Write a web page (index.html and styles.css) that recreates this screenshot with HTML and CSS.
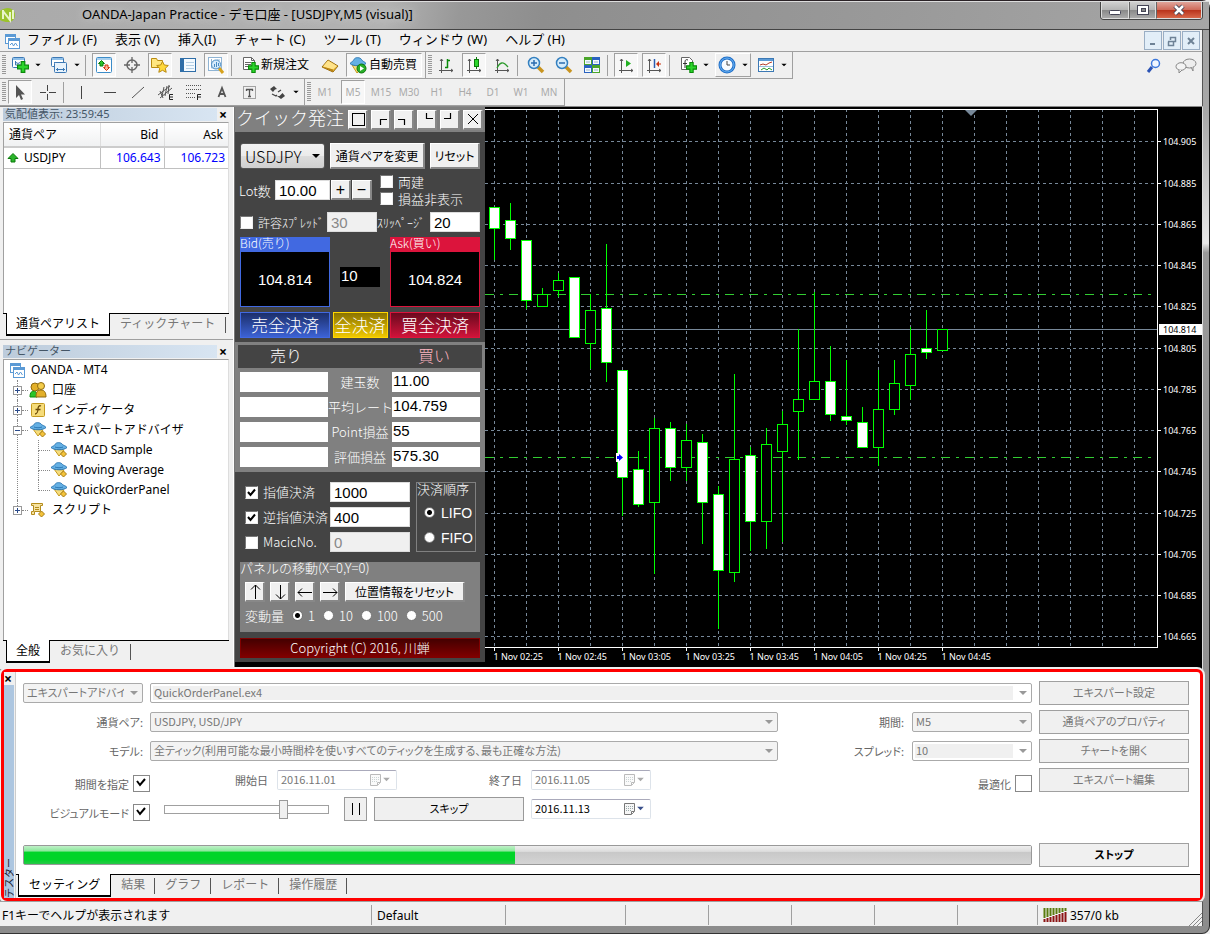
FILE: index.html
```html
<!DOCTYPE html>
<html lang="ja">
<head>
<meta charset="utf-8">
<title>OANDA-Japan Practice - デモ口座 - [USDJPY,M5 (visual)]</title>
<link rel="stylesheet" href="styles.css">
</head>
<body>
<svg class="defs" aria-hidden="true">
  <defs>
    <symbol id="i-plus" viewBox="0 0 10 10"><path d="M3.500.5h3v3h3v3h-3v3h-3v-3h-3v-3h3z" fill="#2bd52b" stroke="#0a8a0a"/></symbol>
    <symbol id="i-mt" viewBox="0 0 16 16"><rect x="1.500" y="1.500" width="10" height="9" fill="#fff" stroke="#5b9ad5"/><path d="M1 3h11" stroke="#5b9ad5" stroke-width="2"/><rect x="4.500" y="5.500" width="11" height="10" fill="#fff" stroke="#5b9ad5"/><path d="M4 7h12" stroke="#5b9ad5" stroke-width="2"/><path d="M6 12l2-2 1.500 3 2-3 2 3" fill="none" stroke="#5b9ad5"/></symbol>
    <symbol id="i-newchart" viewBox="0 0 18 18"><rect x="1.500" y="1.500" width="12" height="10" rx="1" fill="#fff" stroke="#3c78b4"/><path d="M2 3h11" stroke="#8fc0ea" stroke-width="2"/><path d="M4.500 5v4h5M5 6.500l2 1 2-1" fill="none" stroke="#3c78b4"/><use href="#i-plus" x="6" y="5" width="12" height="12"/></symbol>
    <symbol id="i-profiles" viewBox="0 0 18 18"><rect x="1.500" y="1.500" width="12" height="9" rx="1" fill="#fff" stroke="#3c78b4"/><path d="M2 3h11" stroke="#8fc0ea" stroke-width="2"/><path d="M4 6.500h6" stroke="#3c78b4"/><rect x="4.500" y="6.500" width="12" height="10" rx="1" fill="#e8f3fc" stroke="#3c78b4"/><path d="M6 13.500h9M7.500 15v-3M13.500 15v-3" stroke="#3c78b4"/></symbol>
    <symbol id="i-market" viewBox="0 0 18 18"><rect x="1.500" y="1.500" width="15" height="15" rx="1" fill="#fff" stroke="#3c8cc8"/><path d="M2 3h14" stroke="#a8d0ee" stroke-width="2"/><path d="M6.500 4.500l3 3H8v2.500H5V7.500H3.500z" fill="#2bc52b" stroke="#0a7a0a"/><path d="M11.500 14.500l3-3H13V9h-3v2.500H8.500z" fill="#ffb49a" stroke="#d0340a"/></symbol>
    <symbol id="i-cross" viewBox="0 0 18 18"><circle cx="9" cy="9" r="5" fill="none" stroke="#666" stroke-width="1.500"/><path d="M9 1v6M9 11v6M1 9h6M11 9h6" stroke="#666" stroke-width="1.300"/></symbol>
    <symbol id="i-star" viewBox="0 0 18 18"><path d="M.5 2.500h5l1 2h5v7H.5z" fill="#ffe680" stroke="#b98a10"/><path d="M11.500 5.500l1.800 3.500 4 .5-3 2.800.9 4-3.700-2-3.700 2 .9-4-3-2.800 4-.5z" fill="#ffd83a" stroke="#b98a10"/></symbol>
    <symbol id="i-data" viewBox="0 0 18 18"><rect x="1.500" y="2.500" width="15" height="13" fill="#f4faff" stroke="#2f6ea8"/><path d="M3.500 3v12" stroke="#2f6ea8" stroke-width="3"/><path d="M7 6.500h8M7 9.500h8M7 12.500h8" stroke="#b4cfe4"/></symbol>
    <symbol id="i-tester" viewBox="0 0 18 18"><rect x="1.500" y="1.500" width="13" height="13" fill="#fff" stroke="#8fb4d4"/><path d="M4.500 3v9h9M5 6h2M10 4h3" fill="none" stroke="#8fb4d4"/><path d="M12 12l4 5" stroke="#d7a21c" stroke-width="3"/><circle cx="9" cy="8.500" r="4.500" fill="#cfe8fa" fill-opacity=".85" stroke="#4a8cc4"/><path d="M7.500 11V8M9.500 11V6M11.500 10V7" stroke="#4a8cc4"/></symbol>
    <symbol id="i-order" viewBox="0 0 18 18"><path d="M2.500 1.500h8l3 3v9h-11z" fill="#fff" stroke="#666"/><path d="M10.500 1.500v3h3M4 6.500h6M4 8.500h6M4 10.500h4" fill="none" stroke="#666"/><use href="#i-plus" x="7" y="6" width="11" height="11"/></symbol>
    <symbol id="i-gold" viewBox="0 0 18 18"><path d="M1 11l6-7 10 6-5 6z" fill="#e9b830" stroke="#9a6c10"/><path d="M2 10.500l5-6 9 5.500-4 3.500z" fill="#ffe38a"/><path d="M1 10.500l11 3V16z" fill="#b98214"/></symbol>
    <symbol id="i-ea" viewBox="0 0 18 18"><path d="M4 8l5 7 5-6z" fill="#f7dc7a" stroke="#c49a20"/><path d="M1 6.500c2-2 3-1 4-3C6 1 11 1 12.500 3.500c1 1 3 1 4.500 3-3 3-13 3-16 0z" fill="#64b0e4" stroke="#2d78b4"/><path d="M5 6c2 1 6 1 8 0" fill="none" stroke="#2d78b4"/><path d="M13.500 10l3 3-3 3-3-3z" fill="#f3c23a" stroke="#a97d14"/></symbol>
    <symbol id="i-auto" viewBox="0 0 18 18"><path d="M3 9l5 8 7-7z" fill="#f7dc7a" stroke="#c49a20"/><path d="M1 7.500c2-2 3-2 4-4C6 1 11 1 12.500 3.500c1 2 3 2 4.500 4-3 3-13 3-16 0z" fill="#64b0e4" stroke="#2d78b4"/><circle cx="12.500" cy="12.500" r="4.500" fill="#27ae27" stroke="#0b750b"/><path d="M11 10l4 2.500-4 2.500z" fill="#fff"/></symbol>
    <symbol id="i-axes" viewBox="0 0 18 18"><path d="M4.500 3v14M2 14.500h14M3 5l1.500-2L6 5M14 13l2 1.500-2 1.500" fill="none" stroke="#555"/></symbol>
    <symbol id="i-bars" viewBox="0 0 18 18"><use href="#i-axes"/><path d="M10.500 3v9M10 4.500h3M8 11.500h3" stroke="#0a8a0a" stroke-width="1.500"/></symbol>
    <symbol id="i-candle" viewBox="0 0 18 18"><use href="#i-axes"/><path d="M11.500 1v12" stroke="#0a7a0a"/><rect x="9.500" y="3.500" width="4" height="7" fill="#2bd52b" stroke="#0a7a0a"/></symbol>
    <symbol id="i-line" viewBox="0 0 18 18"><use href="#i-axes"/><path d="M4 12c3-6 6-7 11-1" fill="none" stroke="#2a9a2a" stroke-width="1.300"/></symbol>
    <symbol id="i-zoomin" viewBox="0 0 18 18"><path d="M11 11l5 5" stroke="#c89420" stroke-width="3.500"/><circle cx="7" cy="7" r="5.500" fill="#d6ecfb" stroke="#3480c0" stroke-width="1.500"/><path d="M4 7h6M7 4v6" stroke="#2a6cb0" stroke-width="1.500"/></symbol>
    <symbol id="i-zoomout" viewBox="0 0 18 18"><path d="M11 11l5 5" stroke="#c89420" stroke-width="3.500"/><circle cx="7" cy="7" r="5.500" fill="#d6ecfb" stroke="#3480c0" stroke-width="1.500"/><path d="M4 7h6" stroke="#2a6cb0" stroke-width="1.500"/></symbol>
    <symbol id="i-tile" viewBox="0 0 18 18"><path d="M1 1h8v8H1zM9 9h8v8H9z" fill="#4aa52a"/><path d="M9 1h8v8H9zM1 9h8v8H1z" fill="#2a62c0"/><path d="M2 4h6v4H2zM10 4h6v4h-6zM2 12h6v4H2zM10 12h6v4h-6z" fill="#f4faff"/><path d="M3 6h4M11 6h4M3 14h4M11 14h4" stroke="#9ab4c8"/></symbol>
    <symbol id="i-scroll" viewBox="0 0 18 18"><use href="#i-axes"/><path d="M9 4l5 3.500L9 11z" fill="#22b022"/></symbol>
    <symbol id="i-shift" viewBox="0 0 18 18"><use href="#i-axes"/><path d="M9.500 3v9" stroke="#2a5cb0" stroke-width="1.500"/><path d="M11 8l3-3v6z" fill="#c83210"/><path d="M13 8h3" stroke="#c83210"/></symbol>
    <symbol id="i-ind" viewBox="0 0 18 18"><path d="M2.500 1.500h8l3 3v9h-11z" fill="#fff" stroke="#666"/><path d="M9 4c-2-1-3 0-3 2v6M4 7.500h4" fill="none" stroke="#333"/><use href="#i-plus" x="7" y="6" width="11" height="11"/></symbol>
    <symbol id="i-clock" viewBox="0 0 18 18"><circle cx="9" cy="9" r="7" fill="#f6fbff" stroke="#1f6ec8" stroke-width="3"/><circle cx="9" cy="9" r="7" fill="none" stroke="#6ab4f4"/><path d="M9 5v4h3" fill="none" stroke="#444"/></symbol>
    <symbol id="i-tmpl" viewBox="0 0 18 18"><rect x="1.500" y="2.500" width="15" height="13" fill="#fff" stroke="#3c78b4"/><path d="M2 4h14" stroke="#5b9ad5" stroke-width="2"/><path d="M3 9l3-1 3 1 3-2 3-1" fill="none" stroke="#b43c28"/><path d="M2 10.500h14" stroke="#9ac0e0"/><path d="M4 14l3-2 3 2 2-2 3 2" fill="none" stroke="#2a9a2a"/></symbol>
    <symbol id="i-cursor" viewBox="0 0 18 18"><path d="M5 2v13l3-3 2 5 2-1-2-4.500h4z" fill="#555"/></symbol>
    <symbol id="i-cross2" viewBox="0 0 18 18"><path d="M8.500 2v6M8.500 11v6M1 9.500h6M10 9.500h7" stroke="#444"/></symbol>
    <symbol id="i-vline" viewBox="0 0 18 18"><path d="M8.500 3v13" stroke="#444"/></symbol>
    <symbol id="i-hline" viewBox="0 0 18 18"><path d="M3 9.500h12" stroke="#444"/></symbol>
    <symbol id="i-trend" viewBox="0 0 18 18"><path d="M3 15L15 4" stroke="#555"/></symbol>
    <symbol id="i-chan" viewBox="0 0 18 18"><path d="M1 12L13 3M3 15L15 5M3 8l3 7M7 4L5 13M10 3L8 13M12 2l-1 9" stroke="#555"/><path d="M16 11.500h-3.500v5H16M12.500 14H16" fill="none" stroke="#222"/></symbol>
    <symbol id="i-fibo" viewBox="0 0 18 18"><path d="M1 2.500h15M1 6.500h15M1 10.500h10M1 14.500h9" stroke="#555" stroke-dasharray="1 1"/><path d="M16 11.500h-3.500V17M12.500 14H16" fill="none" stroke="#222"/></symbol>
    <symbol id="i-textA" viewBox="0 0 18 18"><path d="M5.500 14L9 5l3.500 9M6.500 11h5" fill="none" stroke="#555" stroke-width="1.800"/></symbol>
    <symbol id="i-textT" viewBox="0 0 18 18"><rect x="2.500" y="3.500" width="12" height="12" fill="none" stroke="#555" stroke-dasharray="1 1"/><path d="M5 6.500h7M8.500 6v8M5.500 6v2M11.500 6v2M7 13.500h3" stroke="#555" stroke-width="1.300"/></symbol>
    <symbol id="i-shapes" viewBox="0 0 18 18"><path d="M5 3l3 3-2 .5L4 9 1 6z M12 16l-4-3h2.500l3-3 2.500 3z" fill="#444"/><path d="M3 11l4 2 1-1M9 9l3-2" fill="none" stroke="#444" stroke-width="1.300"/></symbol>
    <symbol id="i-search" viewBox="0 0 18 18"><path d="M7 10l-4 5" stroke="#2a52b4" stroke-width="3"/><circle cx="10.500" cy="6.500" r="4" fill="#f0f6ff" stroke="#3c78dc" stroke-width="1.500"/></symbol>
    <symbol id="i-chat" viewBox="0 0 22 18"><ellipse cx="14.500" cy="6.500" rx="6.500" ry="4.500" fill="#eee" stroke="#888"/><path d="M16 10l2 4v-4" fill="#eee" stroke="#888"/><ellipse cx="6" cy="9.500" rx="5" ry="3.800" fill="#f4f4f4" stroke="#888"/><path d="M4 13v3l3-3" fill="#f4f4f4" stroke="#888"/></symbol>
    <symbol id="i-acc" viewBox="0 0 18 18"><path d="M1 16c0-5 2-6 4-6s3 2 3 6z" fill="#2bc52b" stroke="#0a8a0a"/><circle cx="6" cy="6" r="4" fill="#e3b02a" stroke="#8f6a10"/><path d="M7 16c0-6 2-7 5-7s5 2 5 7z" fill="#e3b02a" stroke="#8f6a10"/><circle cx="12" cy="5" r="3.500" fill="#f3cc4a" stroke="#8f6a10"/></symbol>
    <symbol id="i-func" viewBox="0 0 18 18"><rect x="2.500" y="2.500" width="13" height="13" rx="1" fill="#f6dc7a" stroke="#c49a20"/><path d="M12 5c-2-1-3 1-3 3s-1 5-3 5M6.500 8.500h5" fill="none" stroke="#6a4a08" stroke-width="1.300"/></symbol>
    <symbol id="i-script" viewBox="0 0 18 18"><path d="M2.500 2.500h11v2h-2v6h-6v3h-3v-3h2v-6h-2z" fill="#f6e3a0" stroke="#b48c1c"/><path d="M6 6.500h4M6 8.500h4" stroke="#b48c1c"/><path d="M12.500 10l3 3-3 3-3-3z" fill="#f3c23a" stroke="#a97d14"/></symbol>
    <symbol id="i-cal" viewBox="0 0 13 13"><path d="M1.500 1.500h10v8l-3 3h-7z" fill="#f6f6f6" stroke="#777"/><path d="M3 4.500h7M3 6.500h7M3 8.500h5" stroke="#9aa" stroke-dasharray="1 1"/><path d="M8.500 12v-2.500H11" fill="#fff" stroke="#777"/></symbol>
    <symbol id="i-drop" viewBox="0 0 8 6"><path d="M0 1h8L4 5z" fill="currentColor"/></symbol>
  </defs>
</svg>

<div class="window">
  <header class="titlebar">
    <svg class="logo" viewBox="0 0 16 18" aria-hidden="true"><path d="M0 4c8-6 15-2 15 4 0 7-7 9-15 5z" fill="#9bc32c"/><path d="M3 3v9M3 4l7 9V5M13 3v9" fill="none" stroke="#e9f5c8" stroke-width="2"/></svg>
    <h1 class="caption">OANDA-Japan Practice - デモ口座 - [USDJPY,M5 (visual)]</h1>
    <div class="winbtns">
      <button class="winbtn" aria-label="最小化"><svg viewBox="0 0 16 14"><rect x="2.500" y="7.500" width="11" height="4" rx="1" fill="#fff" stroke="#445"/></svg></button>
      <button class="winbtn" aria-label="最大化"><svg viewBox="0 0 16 14"><rect x="2.500" y="2.500" width="11" height="9" fill="#fff" stroke="#445"/><rect x="6.500" y="5.500" width="4" height="3" fill="#888" stroke="#445"/></svg></button>
      <button class="winbtn winbtn-close" aria-label="閉じる"><svg viewBox="0 0 16 14"><path d="M4 3l8 8M12 3l-8 8" stroke="#445" stroke-width="4.500"/><path d="M4 3l8 8M12 3l-8 8" stroke="#fff" stroke-width="2.500"/></svg></button>
    </div>
  </header>

  <nav class="menubar">
    <svg class="menu-icon"><use href="#i-mt"/></svg>
    <button>ファイル (F)</button><button>表示 (V)</button><button>挿入(I)</button><button>チャート (C)</button><button>ツール (T)</button><button>ウィンドウ (W)</button><button>ヘルプ (H)</button>
    <div class="mdibtns">
      <button aria-label="最小化"><svg viewBox="0 0 12 12"><path d="M3 9h5" stroke="#6e8296" stroke-width="2"/></svg></button>
      <button aria-label="元に戻す"><svg viewBox="0 0 12 12"><path d="M4.500 5V2.500h5v4H8M2 6.500h5.500v4h-5v-4" fill="none" stroke="#6e8296" stroke-width="1.500"/></svg></button>
      <button aria-label="閉じる"><svg viewBox="0 0 12 12"><path d="M3 3l6 6M9 3l-6 6" stroke="#6e8296" stroke-width="2"/></svg></button>
    </div>
  </nav>

  <div class="toolrow">
    <div class="toolbar">
      <span class="grip"></span>
      <button class="tb drop" aria-label="新規チャート"><svg><use href="#i-newchart"/></svg><svg class="arr"><use href="#i-drop"/></svg></button>
      <button class="tb drop" aria-label="プロファイル"><svg><use href="#i-profiles"/></svg><svg class="arr"><use href="#i-drop"/></svg></button>
      <span class="sep"></span>
      <button class="tb on" aria-label="気配値表示"><svg><use href="#i-market"/></svg></button>
      <button class="tb" aria-label="十字"><svg><use href="#i-cross"/></svg></button>
      <button class="tb on" aria-label="ナビゲーター"><svg><use href="#i-star"/></svg></button>
      <button class="tb" aria-label="データウィンドウ"><svg><use href="#i-data"/></svg></button>
      <button class="tb on" aria-label="ストラテジーテスター"><svg><use href="#i-tester"/></svg></button>
      <span class="sep"></span>
      <button class="tb wide"><svg><use href="#i-order"/></svg>新規注文</button>
      <button class="tb" aria-label="メタエディター"><svg><use href="#i-gold"/></svg></button>
      <button class="tb wide on"><svg><use href="#i-auto"/></svg>自動売買</button>
      <span class="sep end"></span>
    </div>
    <div class="toolbar">
      <span class="grip"></span>
      <button class="tb" aria-label="バーチャート"><svg><use href="#i-bars"/></svg></button>
      <button class="tb on" aria-label="ローソク足"><svg><use href="#i-candle"/></svg></button>
      <button class="tb" aria-label="ライン"><svg><use href="#i-line"/></svg></button>
      <span class="sep"></span>
      <button class="tb" aria-label="拡大"><svg><use href="#i-zoomin"/></svg></button>
      <button class="tb" aria-label="縮小"><svg><use href="#i-zoomout"/></svg></button>
      <button class="tb" aria-label="整列"><svg><use href="#i-tile"/></svg></button>
      <span class="sep"></span>
      <button class="tb on" aria-label="自動スクロール"><svg><use href="#i-scroll"/></svg></button>
      <button class="tb on" aria-label="チャートシフト"><svg><use href="#i-shift"/></svg></button>
      <span class="sep"></span>
      <button class="tb drop" aria-label="インディケータ"><svg><use href="#i-ind"/></svg><svg class="arr"><use href="#i-drop"/></svg></button>
      <button class="tb drop raised" aria-label="周期"><svg><use href="#i-clock"/></svg><svg class="arr"><use href="#i-drop"/></svg></button>
      <button class="tb drop" aria-label="テンプレート"><svg><use href="#i-tmpl"/></svg><svg class="arr"><use href="#i-drop"/></svg></button>
      <span class="sep end"></span>
    </div>
    <div class="toolright">
      <button class="tb" aria-label="検索"><svg><use href="#i-search"/></svg></button>
      <button class="tb chat" aria-label="チャット"><svg><use href="#i-chat"/></svg></button>
    </div>
  </div>

  <div class="toolrow">
    <div class="toolbar">
      <span class="grip"></span>
      <button class="tb on" aria-label="カーソル"><svg><use href="#i-cursor"/></svg></button>
      <button class="tb" aria-label="十字カーソル"><svg><use href="#i-cross2"/></svg></button>
      <span class="sep"></span>
      <button class="tb" aria-label="垂直線"><svg><use href="#i-vline"/></svg></button>
      <button class="tb" aria-label="水平線"><svg><use href="#i-hline"/></svg></button>
      <button class="tb" aria-label="トレンドライン"><svg><use href="#i-trend"/></svg></button>
      <button class="tb" aria-label="チャネル"><svg><use href="#i-chan"/></svg></button>
      <button class="tb" aria-label="フィボナッチ"><svg><use href="#i-fibo"/></svg></button>
      <button class="tb" aria-label="テキスト"><svg><use href="#i-textA"/></svg></button>
      <button class="tb" aria-label="ラベル"><svg><use href="#i-textT"/></svg></button>
      <button class="tb drop" aria-label="矢印"><svg><use href="#i-shapes"/></svg><svg class="arr"><use href="#i-drop"/></svg></button>
      <span class="sep end"></span>
    </div>
    <div class="toolbar">
      <span class="grip"></span>
      <button class="tb tf">M1</button><button class="tb tf on">M5</button><button class="tb tf">M15</button><button class="tb tf">M30</button><button class="tb tf">H1</button><button class="tb tf">H4</button><button class="tb tf">D1</button><button class="tb tf">W1</button><button class="tb tf">MN</button>
      <span class="sep end"></span>
    </div>
  </div>

  <main class="main">
    <aside class="docks">
      <section class="dock dock-market">
        <header class="docktitle"><h2>気配値表示: 23:59:45</h2><button class="x" aria-label="閉じる">×</button></header>
        <div class="dockbody">
          <table class="quotes">
            <thead><tr><th>通貨ペア</th><th>Bid</th><th>Ask</th></tr></thead>
            <tbody><tr><td><svg class="up" viewBox="0 0 12 12"><path d="M6 1.500L11 6.500H8V10H4V6.500H1z" fill="#2bb52b" stroke="#0a7a0a"/></svg>USDJPY</td><td>106.643</td><td>106.723</td></tr></tbody>
          </table>
        </div>
        <div class="tabs"><button class="tab active">通貨ペアリスト</button><button class="tab">ティックチャート</button></div>
      </section>
      <section class="dock dock-nav">
        <header class="docktitle"><h2>ナビゲーター</h2><button class="x" aria-label="閉じる">×</button></header>
        <div class="dockbody">
          <div class="root"><svg><use href="#i-mt"/></svg>OANDA - MT4</div>
          <ul class="tree">
            <li><span class="node"><i class="box plus"></i><svg><use href="#i-acc"/></svg>口座</span></li>
            <li><span class="node"><i class="box plus"></i><svg><use href="#i-func"/></svg>インディケータ</span></li>
            <li><span class="node"><i class="box"></i><svg><use href="#i-ea"/></svg>エキスパートアドバイザ</span>
              <ul class="subtree">
                <li><span class="node"><svg><use href="#i-ea"/></svg>MACD Sample</span></li>
                <li><span class="node"><svg><use href="#i-ea"/></svg>Moving Average</span></li>
                <li><span class="node"><svg><use href="#i-ea"/></svg>QuickOrderPanel</span></li>
              </ul>
            </li>
            <li><span class="node"><i class="box plus"></i><svg><use href="#i-script"/></svg>スクリプト</span></li>
          </ul>
        </div>
        <div class="tabs"><button class="tab active">全般</button><button class="tab">お気に入り</button></div>
      </section>
    </aside>

    <div class="chartwin">
      <section class="panel">
        <header class="phead">
          <h2>クイック発注</h2>
          <button class="pb sq" aria-label="最大化"><svg viewBox="0 0 16 16"><rect x="2.500" y="2.500" width="12" height="12" fill="none" stroke="#000"/></svg></button>
          <button class="pb sq" aria-label="左上"><svg viewBox="0 0 16 16"><path d="M7.500 14V8.500H14" fill="none" stroke="#000" stroke-width="1.200"/></svg></button>
          <button class="pb sq" aria-label="右上"><svg viewBox="0 0 16 16"><path d="M2 8.500h6.500V14" fill="none" stroke="#000" stroke-width="1.200"/></svg></button>
          <button class="pb sq" aria-label="左下"><svg viewBox="0 0 16 16"><path d="M7.500 2v5.500H14" fill="none" stroke="#000" stroke-width="1.200"/></svg></button>
          <button class="pb sq" aria-label="右下"><svg viewBox="0 0 16 16"><path d="M2 7.500h6.500V2" fill="none" stroke="#000" stroke-width="1.200"/></svg></button>
          <button class="pb sq" aria-label="閉じる"><svg viewBox="0 0 16 16"><path d="M3 3l10 10M13 3L3 13" stroke="#000"/></svg></button>
        </header>
        <div class="prow row-pair">
          <select class="pselect" aria-label="通貨ペア"><option>USDJPY</option></select>
          <button class="pb pair">通貨ペアを変更</button>
          <button class="pb reset">リセット</button>
        </div>
        <div class="prow row-lot">
          <label for="lot">Lot数</label>
          <input id="lot" class="num lot" value="10.00">
          <button class="pb sq sign">+</button><button class="pb sq sign">−</button>
          <div class="opts">
            <label><input type="checkbox">両建</label>
            <label><input type="checkbox">損益非表示</label>
          </div>
        </div>
        <div class="prow row-spread">
          <label class="sp"><input type="checkbox">許容ｽﾌﾟﾚｯﾄﾞ</label>
          <input class="num" value="30" disabled aria-label="許容スプレッド">
          <label class="slip" for="slip">ｽﾘｯﾍﾟｰｼﾞ</label>
          <input id="slip" class="num" value="20">
        </div>
        <div class="prices">
          <div class="price bid"><span>Bid(売り)</span><button>104.814</button></div>
          <output class="spread">10</output>
          <div class="price ask"><span>Ask(買い)</span><button>104.824</button></div>
          <button class="close-btn c-bid">売全決済</button>
          <button class="close-btn c-all">全決済</button>
          <button class="close-btn c-ask">買全決済</button>
        </div>
        <div class="positions">
          <div class="poshead"><span>売り</span><span class="buy">買い</span></div>
          <div class="posgrid">
            <output></output><span>建玉数</span><output>11.00</output>
            <output></output><span>平均レート</span><output>104.759</output>
            <output></output><span>Point損益</span><output>55</output>
            <output></output><span>評価損益</span><output>575.30</output>
          </div>
        </div>
        <div class="limits">
          <div class="limitgrid">
            <label><input type="checkbox" checked>指値決済</label><input class="num" value="1000" aria-label="指値決済">
            <label><input type="checkbox" checked>逆指値決済</label><input class="num" value="400" aria-label="逆指値決済">
            <label><input type="checkbox">MacicNo.</label><input class="num" value="0" disabled aria-label="MacicNo.">
          </div>
          <div class="order" role="radiogroup" aria-labelledby="ord">
            <span id="ord">決済順序</span>
            <label><input type="radio" name="ord" checked>LIFO</label>
            <label><input type="radio" name="ord">FIFO</label>
          </div>
        </div>
        <div class="move">
          <span class="movetitle">パネルの移動(X=0,Y=0)</span>
          <div class="movebtns">
            <button class="pb sq" aria-label="上"><svg viewBox="0 0 16 16"><path d="M8.500 15V1M4 5.500L8.500 1 13 5.500" fill="none" stroke="#000"/></svg></button>
            <button class="pb sq" aria-label="下"><svg viewBox="0 0 16 16"><path d="M8.500 1v14M4 10.500L8.500 15l4.500-4.500" fill="none" stroke="#000"/></svg></button>
            <button class="pb sq" aria-label="左"><svg viewBox="0 0 16 16"><path d="M15 8.500H1M5 4.500l-4 4 4 4" fill="none" stroke="#000"/></svg></button>
            <button class="pb sq" aria-label="右"><svg viewBox="0 0 16 16"><path d="M1 8.500h14M11 4.500l4 4-4 4" fill="none" stroke="#000"/></svg></button>
            <button class="pb posreset">位置情報をリセット</button>
          </div>
          <div class="steps">
            <span>変動量</span>
            <label><input type="radio" name="st" checked>1</label>
            <label><input type="radio" name="st">10</label>
            <label><input type="radio" name="st">100</label>
            <label><input type="radio" name="st">500</label>
          </div>
        </div>
        <footer class="copy">Copyright (C) 2016, 川蝉</footer>
      </section>
      <div class="chart"><svg id="chart" role="img" aria-label="USDJPY M5"></svg></div>
    </div>
  </main>

  <section class="tester">
    <div class="side"><button class="x" aria-label="閉じる">×</button><h2>テスター</h2></div>
    <div class="tmain">
      <div class="form">
        <div class="frow">
          <select class="ts c1" disabled aria-label="種類"><option>エキスパートアドバイザ</option></select>
          <select class="ts combo grow" disabled aria-label="エキスパート"><option>QuickOrderPanel.ex4</option></select>
          <button class="tbtn" disabled>エキスパート設定</button>
        </div>
        <div class="frow">
          <label class="c1" for="sym">通貨ペア:</label>
          <select id="sym" class="ts grow" disabled><option>USDJPY, USD/JPY</option></select>
          <label class="c3" for="per">期間:</label>
          <select id="per" class="ts c4" disabled><option>M5</option></select>
          <button class="tbtn" disabled>通貨ペアのプロパティ</button>
        </div>
        <div class="frow">
          <label class="c1" for="mod">モデル:</label>
          <select id="mod" class="ts grow" disabled><option>全ティック(利用可能な最小時間枠を使いすべてのティックを生成する、最も正確な方法)</option></select>
          <label class="c3" for="spr">スプレッド:</label>
          <select id="spr" class="ts combo c4" disabled><option>10</option></select>
          <button class="tbtn" disabled>チャートを開く</button>
        </div>
        <div class="frow">
          <label class="chk">期間を指定<input type="checkbox" checked></label>
          <label class="dl from" for="d1">開始日</label>
          <span class="date off"><input id="d1" value="2016.11.01" disabled><svg class="cal"><use href="#i-cal"/></svg><svg class="arr"><use href="#i-drop"/></svg></span>
          <label class="dl to" for="d2">終了日</label>
          <span class="date off"><input id="d2" value="2016.11.05" disabled><svg class="cal"><use href="#i-cal"/></svg><svg class="arr"><use href="#i-drop"/></svg></span>
          <label class="chk opt">最適化<input type="checkbox"></label>
          <button class="tbtn" disabled>エキスパート編集</button>
        </div>
        <div class="frow">
          <label class="chk">ビジュアルモード<input type="checkbox" checked></label>
          <input class="speed" type="range" min="0" max="100" value="74" aria-label="速度">
          <button class="pause" aria-label="一時停止"><svg viewBox="0 0 14 14"><path d="M3.500 1v12M10.500 1v12" stroke="#000"/></svg></button>
          <button class="skip">スキップ</button>
          <span class="date"><input value="2016.11.13" aria-label="スキップ先"><svg class="cal"><use href="#i-cal"/></svg><svg class="arr"><use href="#i-drop"/></svg></span>
        </div>
        <div class="frow run">
          <progress class="grow" max="1000" value="488" aria-label="進捗"></progress>
          <button class="tbtn stop">ストップ</button>
        </div>
      </div>
      <div class="tabs ttabs"><button class="tab active">セッティング</button><button class="tab">結果</button><button class="tab">グラフ</button><button class="tab">レポート</button><button class="tab">操作履歴</button></div>
    </div>
  </section>

  <footer class="status">
    <span class="s-help">F1キーでヘルプが表示されます</span>
    <span class="s-prof">Default</span>
    <span class="s1"></span><span class="s2"></span><span class="s2"></span><span class="s2"></span><span class="s2"></span><span class="s3"></span>
    <span class="s-net"><svg viewBox="0 0 24 14"><path d="M1.500 0v10M4.500 0v9M7.500 0v8M10.500 0v7M13.500 0v6M16.500 0v5M19.500 0v4M22.500 0v3" stroke="#5a7d10" stroke-width="2"/><path d="M1.500 11v3M4.500 10v4M7.500 9v5M10.500 8v6M13.500 7v7M16.500 6v8M19.500 5v9M22.500 4v10" stroke="#8c1414" stroke-width="2"/></svg>357/0 kb</span>
    <svg class="resize" viewBox="0 0 14 14"><path d="M1 14L14 1M5 14l9-9M9 14l5-5" stroke="#888"/></svg>
  </footer>
</div>
<script src="chart.js"></script>
</body>
</html>
```
FILE: styles.css
```css
* { box-sizing: border-box; }
:root {
  --ui: "Noto Sans", "Noto Sans CJK JP", sans-serif;
  --jp: "Noto Sans CJK JP", "Noto Sans", sans-serif;
  --num: "Liberation Sans", "Noto Sans CJK JP", sans-serif;
  --face: #f0f0f0;
  --line: #a0a0a0;
}
html, body { margin: 0; height: 100%; }
body { font: 12px/16px var(--ui); color: #000; background: var(--face); }
button, input, select { font: inherit; color: inherit; margin: 0; padding: 0; border: 0; border-radius: 0; background: none; }
h1, h2 { margin: 0; font-size: inherit; font-weight: 400; }
svg { display: block; flex: none; }
.defs { position: absolute; width: 0; height: 0; }

.window {
  display: flex; flex-direction: column; height: 100vh;
  border-top: 1px solid #2a2226; border-bottom: 1px solid #333; border-right: 1px solid #222;
  padding: 0 6px 7px 0;
  background: linear-gradient(#9e9e9e, #a8a8a8 12%, #e8e8e8 26%, #999 27%, #8c8c8c);
  border-radius: 0 8px 8px 0;
}
.titlebar {
  display: flex; align-items: center; height: 29px;
  margin-right: -6px;
  border-top: 1px solid #ddd; border-bottom: 1px solid #444;
  background: linear-gradient(100deg, #aaa, #b2b2b2 32%, #989898 38%, #8e8e8e 45%, #9a9a9a 75%, #a6a6a6);
}
.logo { width: 16px; height: 18px; margin-right: 66px; }
.caption { flex: 1; padding-bottom: 3px; font-size: 13px; line-height: 24px; text-shadow: 0 0 8px #ddd; }
.winbtns { display: flex; align-self: flex-start; margin-right: 6px; border: 1px solid #444; border-top: 0; border-radius: 0 0 4px 4px; overflow: hidden; }
.winbtn { display: flex; align-items: center; justify-content: center; width: 28px; height: 17px; border: 1px solid #ddd; border-top: 0; background: linear-gradient(#d0d0d0, #b4b4b4 48%, #888 50%, #aaa); }
.winbtn + .winbtn { width: 27px; border-left-color: #666; }
.winbtns .winbtn-close { width: 46px; background: linear-gradient(#e0a49a, #cf6b5a 48%, #b8321a 50%, #d8684a); }
.winbtn svg { width: 16px; height: 14px; }

.menubar { display: flex; align-items: center; height: 22px; padding: 0 2px 0 4px; font-size: 13px; border-right: 1px solid #555; border-bottom: 1px solid var(--line); background: var(--face); }
.menu-icon { width: 16px; height: 16px; margin-right: 7px; }
.menubar > button { margin-right: 18px; padding-bottom: 3px; }
.mdibtns { display: flex; gap: 1px; margin-left: auto; }
.mdibtns button { display: flex; align-items: center; justify-content: center; width: 18px; height: 19px; border: 1px solid #9aaec4; background: #e2eef8; }
.mdibtns svg { width: 12px; height: 12px; }

.toolrow { display: flex; height: 27px; background: var(--face); border-right: 1px solid #555; }
.toolbar { display: flex; align-items: center; padding-left: 2px; border-bottom: 1px solid var(--line); }
.grip { width: 4px; height: 20px; background: repeating-linear-gradient(#999 0 1px, transparent 1px 2px); }
.sep { width: 1px; height: 21px; margin: 0 4px 0 1px; background: var(--line); }
.toolbar .sep.end { height: 26px; margin: 0 0 0 1px; }
.tb { display: flex; align-items: center; justify-content: center; width: 24px; height: 24px; margin: 0 2px; border: 1px solid transparent; }
.tb svg { width: 18px; height: 18px; }
.tb svg.arr { width: 6px; height: 4px; margin-left: 6px; }
.tb.on { border-color: var(--line) #fff #fff var(--line); background: #f7f7f7; }
.tb.drop { width: 36px; margin: 0 1px 0 2px; }
.tb.raised { border-color: #fff var(--line) var(--line) #fff; }
.tb.wide { width: auto; padding: 0 4px 0 2px; gap: 2px; line-height: 14px; }
.tb.tf { font-size: 10px; color: #aaa; }
.toolright { display: flex; align-items: center; gap: 4px; margin-left: auto; padding-right: 2px; }
.tb.chat svg { width: 22px; }

.main { flex: 1; display: flex; min-height: 0; border-top: 1px solid #888; border-right: 1px solid #ddd; background: var(--face); }
.docks { display: flex; flex-direction: column; width: 234px; border-right: 1px solid #fff; }
.dock { display: flex; flex-direction: column; padding: 0 4px 2px 3px; }
.dock-market { height: 233px; border-bottom: 1px solid var(--line); }
.dock-nav { flex: 1; padding-top: 4px; padding-bottom: 5px; }
.docktitle { display: flex; align-items: center; height: 15px; color: #445566; }
.docktitle h2 { flex: 1; line-height: 12px; height: 13px; font-size: 11px; padding-left: 2px; background: linear-gradient(90deg, #bccbdb, #d8e5f2); }
.x { width: 12px; height: 13px; font: 700 14px/12px "Noto Sans", sans-serif; color: #000; }
.dockbody { flex: 1; border: 1px solid var(--line); border-bottom: 0; border-right-color: #ddd; background: #fff; }
.quotes { width: 100%; border-collapse: collapse; table-layout: fixed; }
.quotes th { height: 24px; padding: 0 5px; font-weight: 400; text-align: right; background: linear-gradient(#fff, #f0f1f2); border-right: 1px solid #ddd; border-bottom: 2px solid #ccc; }
.quotes th:first-child, .quotes td:first-child { width: 96px; text-align: left; }
.quotes th:nth-child(2) { width: 64px; }
.quotes td { height: 21px; padding: 0 3px; text-align: right; color: #00f; border-right: 1px solid #c0c0c0; border-bottom: 1px solid #c0c0c0; }
.quotes th:last-child, .quotes td:last-child { border-right: 0; }
.quotes td:first-child { color: #000; }
.up { display: inline-block; width: 12px; height: 12px; margin-right: 5px; vertical-align: -2px; }

.tabs { display: flex; height: 24px; border-top: 1px solid #000; padding-left: 3px; background: var(--face); }
.tab { height: 20px; padding: 0 11px 0 10px; color: #777; position: relative; }
.tab::after { content: ""; position: absolute; right: 0; top: 3px; height: 16px; border-right: 1px solid #555; }
.tab.active { height: 23px; margin-top: -1px; padding: 0 9px; color: #000; background: #fff; border: 1px solid #000; border-top: 0; border-bottom-width: 2px; }
.tab.active::after { content: none; }

.root, .node { display: flex; align-items: center; height: 20px; }
.root { padding-left: 5px; }
.root svg { width: 16px; height: 16px; margin-right: 6px; }
.tree, .subtree { list-style: none; margin: 0; padding: 0; }
.tree { padding-left: 9px; }
.tree > li { position: relative; }
.tree > li::before { content: ""; position: absolute; left: 4px; top: 0; bottom: 0; border-left: 1px dotted #888; }
.tree > li:last-child::before { bottom: 10px; }
.node svg { width: 18px; height: 18px; margin-right: 5px; }
.tree > li > .node svg { margin-left: 7px; }
.box { position: relative; width: 9px; height: 9px; border: 1px solid #999; background: linear-gradient(#2a4a8a, #2a4a8a) 1px 3px / 5px 1px no-repeat, #fff; }
.box.plus { background: linear-gradient(#2a4a8a, #2a4a8a) 1px 3px / 5px 1px no-repeat, linear-gradient(#2a4a8a, #2a4a8a) 3px 1px / 1px 5px no-repeat, #fff; }
.box::after { content: ""; position: absolute; left: 8px; top: 3px; width: 6px; border-top: 1px dotted #888; }
.subtree { margin-left: 25px; }
.subtree li { position: relative; padding-left: 12px; }
.subtree li::before { content: ""; position: absolute; left: 0; top: 0; width: 11px; height: 10px; border-left: 1px dotted #888; border-bottom: 1px dotted #888; }
.subtree li:not(:last-child)::after { content: ""; position: absolute; left: 0; top: 10px; height: 10px; border-left: 1px dotted #888; }

.chartwin { flex: 1; display: flex; min-width: 0; background: #000; border-left: 1px solid #777; }
.chart { flex: 1; min-width: 0; overflow: hidden; }
.chart svg { width: 100%; height: 100%; font: 9px "Noto Sans", sans-serif; fill: #fff; }

.panel { width: 250px; align-self: flex-start; padding-bottom: 4px; background: #444; color: #fff; font: 300 13px/17px var(--jp); }
.panel button, .panel input, .panel select { color: #000; }
.phead { display: flex; align-items: center; height: 25px; padding: 0 2px 0 1px; background: #808080; }
.phead h2 { flex: 1; align-self: flex-start; font-size: 18px; font-weight: 300; line-height: 21px; white-space: nowrap; }
.pb { border: 1px solid; border-color: #fff #888 #888 #fff; border-width: 1px 2px 2px 1px; background: #f0f0f0; height: 26px; font-size: 12px; font-weight: 400; font-feature-settings: "palt"; white-space: nowrap; }
.pb.sq { display: flex; align-items: center; justify-content: center; width: 20px; height: 20px; }
.pb.sign { font: 16px/16px var(--num); }
.pb svg { width: 16px; height: 16px; }
.phead .pb + .pb { margin-left: 3px; }
.prow { display: flex; padding: 0 5px; }
.row-pair { padding-top: 11px; justify-content: space-between; }
.pselect { width: 85px; height: 26px; padding-left: 4px; font-size: 16px; font-weight: 300; appearance: none; border: 1px solid #555; border-radius: 3px; background: url("data:image/svg+xml,%3Csvg xmlns='http://www.w3.org/2000/svg' width='8' height='5'%3E%3Cpath d='M0 0h8L4 4z'/%3E%3C/svg%3E") right 4px center no-repeat, linear-gradient(#f2f2f2, #ebebeb 50%, #ddd 50%, #cfcfcf); }
.pair { width: 95px; }
.reset { width: 50px; }
.row-lot { padding: 4px 4px 0; align-items: center; }
.row-lot > label { width: 36px; white-space: nowrap; }
.row-lot .pb { margin-left: 1px; }
.opts { margin-left: 8px; }
.opts label { display: flex; align-items: center; height: 17px; white-space: nowrap; }
.panel input[type=checkbox] { appearance: none; flex: none; width: 13px; height: 13px; margin-right: 5px; background: #fff; border: 1px solid; border-color: #777 #eee #eee #777; }
.panel input[type=checkbox]:checked { background: #fff url("data:image/svg+xml,%3Csvg xmlns='http://www.w3.org/2000/svg' width='11' height='11'%3E%3Cpath d='M2 5l2.500 3L9 2.500' fill='none' stroke='%23000' stroke-width='2'/%3E%3C/svg%3E"); }
.panel input[type=radio] { appearance: none; flex: none; width: 11px; height: 11px; border-radius: 50%; border: 1px solid #777; background: #fff; }
.panel input[type=radio]:checked { background: radial-gradient(circle, #000 2px, #fff 3px); }
.num { width: 50px; height: 20px; padding: 0 3px; background: #fff; border: 1px solid #ddd; font: 15px var(--num); }
.panel .num:disabled { background: #f0f0f0; color: #888; }
.num.lot { width: 55px; }
.row-spread { align-items: center; margin-top: 5px; font-size: 12px; }
.row-spread label { display: flex; align-items: center; white-space: nowrap; }
.row-spread .sp { width: 87px; }
.row-spread .slip { width: 53px; }
.prices { display: grid; grid-template-columns: 90px 55px 90px; row-gap: 5px; justify-content: space-between; padding: 5px 5px 4px; }
.price { height: 70px; display: flex; flex-direction: column; font-size: 12px; }
.price span { height: 15px; line-height: 12px; }
.price.bid { background: #4169e1; }
.price.ask { background: #dc143c; }
.price button { flex: 1; margin: 0 1px 1px; background: #000; font: 15px var(--num); }
.panel .price button { color: #fff; }
.spread { align-self: center; justify-self: center; width: 40px; height: 20px; margin-top: 9px; background: #000; font: 15px/18px var(--num); padding-left: 1px; }
.close-btn { height: 26px; padding-bottom: 1px; font-size: 17px; font-weight: 300; line-height: 22px; white-space: nowrap; }
.panel .close-btn { color: #fff; }
.c-bid { border: 1px solid #4169e1; background: linear-gradient(#1c2f6a, #3c62d4); }
.c-all { border: 1px solid #ffd700; background: linear-gradient(#8a7300, #f0c800); }
.c-ask { border: 1px solid #dc143c; background: linear-gradient(#6a0a1e, #d0133a); }
.positions { padding: 3px 3px 5px; background: #808080; }
.poshead { display: grid; grid-template-columns: 96px 1fr 96px; height: 23px; font-size: 16px; line-height: 21px; text-align: center; background: #444; }
.poshead .buy { grid-column: 3; color: #ffb6c1; }
.posgrid { display: grid; grid-template-columns: 88px minmax(0, 1fr) 88px; row-gap: 5px; padding: 4px 2px 0; }
.posgrid span { height: 20px; line-height: 19px; text-align: center; white-space: nowrap; }
.posgrid output { height: 20px; padding-left: 1px; background: #fff; color: #000; font: 15px/18px var(--num); }
.limits { display: flex; justify-content: space-between; padding: 10px 9px 10px 10px; }
.limitgrid { display: grid; grid-template-columns: 85px 80px; row-gap: 5px; }
.limitgrid label { display: flex; align-items: center; line-height: 16px; white-space: nowrap; }
.limitgrid .num { width: 80px; }
.order { width: 60px; height: 70px; border: 1px solid #808080; }
.order span { display: block; height: 17px; line-height: 12px; white-space: nowrap; }
.order label { display: flex; align-items: center; height: 25px; padding-left: 7px; gap: 6px; font: 14px var(--num); }
.move { margin: 0 5px; padding-bottom: 5px; background: #808080; }
.movetitle { display: block; height: 20px; line-height: 12px; }
.movebtns { display: flex; gap: 5px; padding-left: 5px; }
.movebtns .posreset { width: 120px; height: 20px; line-height: 16px; }
.steps { display: flex; align-items: center; height: 25px; padding: 2px 0 0 5px; }
.steps span { width: 47px; }
.steps label { display: flex; align-items: center; gap: 5px; margin-right: 8px; }
.copy { height: 20px; margin: 6px 5px 0; line-height: 17px; text-align: center; border: 1px solid #800000; background: linear-gradient(#400, #800000); }

.tester { display: flex; height: 232px; margin: 0 0 0 1px; border: 3px solid #f00; border-radius: 6px; background: #fff; font: 11px/16px var(--jp); font-feature-settings: "palt"; color: #666; box-shadow: 0 0 0 2px var(--face); }
.side { display: flex; flex-direction: column; width: 12px; background: var(--face); border-right: 1px solid #ccc; }
.side .x { width: 8px; }
.side h2 { flex: 1; width: 10px; writing-mode: vertical-rl; text-orientation: sideways; transform: rotate(180deg); line-height: 10px; font-size: 10px; color: #223; background: #adc6e0; font-feature-settings: normal; }
.tmain { flex: 1; min-width: 0; display: flex; flex-direction: column; }
.form { flex: 1; display: flex; flex-direction: column; gap: 5px; padding: 9px 11px 0 7px; }
.frow { display: flex; align-items: center; height: 24px; }
.run { margin-top: 17px; }
.grow { flex: 1; min-width: 0; }
.ts { appearance: none; height: 20px; padding: 0 20px 2px 3px; border: 1px solid #aaa; border-radius: 2px; color: #777; opacity: 1; background: url("data:image/svg+xml,%3Csvg xmlns='http://www.w3.org/2000/svg' width='8' height='5'%3E%3Cpath d='M0 0h8L4 4z' fill='%23999'/%3E%3C/svg%3E") right 4px center no-repeat, #f3f3f3; }
.ts.combo { background: url("data:image/svg+xml,%3Csvg xmlns='http://www.w3.org/2000/svg' width='8' height='5'%3E%3Cpath d='M0 0h8L4 4z' fill='%23999'/%3E%3C/svg%3E") right 4px center no-repeat, linear-gradient(90deg, transparent calc(100% - 18px), #fff 0), linear-gradient(#f0f0f0, #f0f0f0) 2px 2px / calc(100% - 4px) calc(100% - 4px) no-repeat, #fff; }
.c1 { width: 120px; margin-right: 7px; text-align: right; }
select.c1 { text-align: left; padding-right: 18px; }
.c3 { width: 126px; margin-right: 8px; text-align: right; }
.c4 { width: 120px; }
.tbtn { width: 150px; height: 24px; margin-left: 7px; padding-bottom: 2px; border: 1px solid var(--line); background: var(--face); color: #777; }
.tbtn.stop { color: #000; font-weight: 700; }
.chk { display: flex; align-items: center; justify-content: flex-end; align-self: flex-end; width: 127px; gap: 4px; }
.tester input[type=checkbox] { appearance: none; width: 17px; height: 17px; border: 1px solid #888; background: #fff; }
.tester input[type=checkbox]:checked { background: url("data:image/svg+xml,%3Csvg xmlns='http://www.w3.org/2000/svg' width='15' height='15'%3E%3Cpath d='M3 5l3 4 5-6' fill='none' stroke='%23000' stroke-width='2'/%3E%3C/svg%3E"); }
.dl.from { width: 118px; margin-right: 9px; text-align: right; }
.dl.to { width: 125px; margin-right: 9px; text-align: right; }
.opt { margin-left: auto; }
.date { display: flex; align-items: center; width: 120px; height: 20px; padding: 0 6px 2px 3px; border: 1px solid #dde3ea; border-top-color: #aab; border-radius: 2px; color: #3a4f8a; }
.date input { flex: 1; min-width: 0; color: #000; }
.date.off { color: #aaa; }
.date.off input { color: #777; }
.date .cal { width: 13px; height: 13px; }
.date.off .cal { opacity: .5; }
.date .arr { width: 7px; height: 5px; margin-left: 1px; }
.speed { appearance: none; width: 165px; height: 19px; margin: 0 15px 0 14px; }
.speed::-webkit-slider-runnable-track { height: 9px; border: 1px solid var(--line); background: #fff; }
.speed::-webkit-slider-thumb { appearance: none; width: 9px; height: 19px; margin-top: -6px; border: 1px solid #999; background: #f0f0f0; }
.pause, .skip { height: 24px; border: 1px solid #999; background: var(--face); color: #000; }
.pause { display: flex; align-items: center; justify-content: center; width: 23px; }
.pause svg { width: 14px; height: 14px; }
.skip { width: 150px; margin: 0 7px; padding-bottom: 2px; }
progress { appearance: none; height: 20px; border: 1px solid #999; border-radius: 2px; }
progress::-webkit-progress-bar { background: linear-gradient(#eee, #ddd 30%, #c8c8c8 35%, #d4d4d4); }
progress::-webkit-progress-value { background: linear-gradient(#c0f0c8, #8ae89a 28%, #00d428 34%, #00d428 75%, #28c848); }
.ttabs { padding-left: 2px; font: 12px/16px var(--ui); font-feature-settings: normal; }
.ttabs .tab { padding: 0 10px; }

.status { display: flex; height: 25px; padding-top: 3px; background: var(--face); border-top: 1px solid var(--line); border-right: 1px solid #555; position: relative; }
.status span { height: 20px; line-height: 21px; padding-left: 5px; border-left: 1px solid var(--line); white-space: nowrap; }
.status .s-help { flex: 1; padding-left: 2px; border-left: 0; }
.s-prof { width: 134px; }
.s1 { width: 120px; }
.s2 { width: 83px; }
.s3 { width: 80px; }
.status .s-net { display: flex; align-items: center; gap: 3px; width: 165px; }
.s-net svg { width: 24px; height: 14px; }
.resize { position: absolute; right: 0; bottom: 0; width: 14px; height: 14px; }
```
FILE: chart.js
```js
(function () {
  var svg = document.getElementById('chart');
  var NS = 'http://www.w3.org/2000/svg';
  var W = svg.clientWidth, H = svg.clientHeight;
  var right = W - 44, top = 2, bottom = H - 22;
  var GREY = '#778899', LIME = '#00ff00';

  function add(name, attrs, text) {
    var el = document.createElementNS(NS, name);
    for (var k in attrs) el.setAttribute(k, attrs[k]);
    if (text) el.textContent = text;
    svg.appendChild(el);
  }
  function line(x1, y1, x2, y2, color, dash) {
    var a = { d: 'M' + x1 + ' ' + y1 + 'L' + x2 + ' ' + y2, stroke: color, fill: 'none' };
    if (dash) a['stroke-dasharray'] = dash;
    add('path', a);
  }

  for (var x = 9.5; x < right; x += 32) line(x, top, x, bottom, GREY, '3 3');
  for (var i = 0; i < 13; i++) {
    var y = Math.ceil(34 + i * 41.25) + 0.5;
    line(0, y, right, y, GREY, '3 3');
    line(right, y, right + 3, y, '#fff');
    add('text', { x: right + 5, y: y + 3 }, (104.905 - i * 0.02).toFixed(3));
  }
  line(0, 187.5, right, 187.5, '#32cd32', '9 6 3 6');
  line(0, 350.5, right, 350.5, '#32cd32', '9 6 3 6');
  line(0, 222.5, right, 222.5, GREY);

  /* high, body top, body bottom, low, 1 = falling candle */
  var candles = [
    [207,207,229,260,1],[203,220,239,250,1],[240,240,301,309,1],[288,294,307,307,0],
    [273,280,291,297,0],[277,277,338,338,1],[294,310,344,369,0],[244,308,363,382,1],
    [370,370,478,516,1],[451,469,505,507,1],[418,428,503,574,0],[422,428,468,481,1],
    [424,440,468,481,0],[434,442,503,544,1],[486,494,571,629,1],[374,459,573,582,0],
    [447,455,522,551,1],[428,444,522,549,0],[411,424,452,542,0],[329,399,412,460,0],
    [292,381,400,400,0],[346,381,415,421,1],[360,416,421,425,1],[407,422,448,448,1],
    [370,409,448,466,0],[360,383,410,415,0],[327,354,386,400,0],[310,348,353,359,1],
    [329,329,351,351,0]
  ];
  candles.forEach(function (c, n) {
    var cx = 9.5 + n * 16, o = -107;
    line(cx, c[0] + o, cx, c[3] + o, LIME);
    add('rect', { x: cx - 5, y: c[1] + o + 0.5, width: 10, height: Math.max(c[2] - c[1] - 1, 1), fill: c[4] ? '#fff' : '#000', stroke: LIME });
  });

  add('path', { d: 'M131 346h3v-1l5 5.500-5 5.500v-1h-3z', fill: '#fff' });
  add('path', { d: 'M132 349h2v-2l4 3.500-4 3.500v-2h-2z', fill: '#0000ff' });
  add('path', { d: 'M480 3h12l-6 6z', fill: GREY });

  line(0, top + 0.5, right, top + 0.5, '#fff');
  line(right - 0.5, top, right - 0.5, bottom + 1, '#fff');
  line(0, bottom + 0.5, right, bottom + 0.5, '#fff');
  ['02:25', '02:45', '03:05', '03:25', '03:45', '04:05', '04:25', '04:45'].forEach(function (t, n) {
    var tx = 9.5 + n * 64;
    line(tx, bottom, tx, bottom + 4, '#fff');
    add('text', { x: tx - 1, y: bottom + 13 }, '1 Nov ' + t);
  });
  add('rect', { x: right + 1, y: 217, width: 43, height: 11, fill: '#fff' });
  add('text', { x: right + 5, y: 226, fill: '#000' }, '104.814');
})();
```
